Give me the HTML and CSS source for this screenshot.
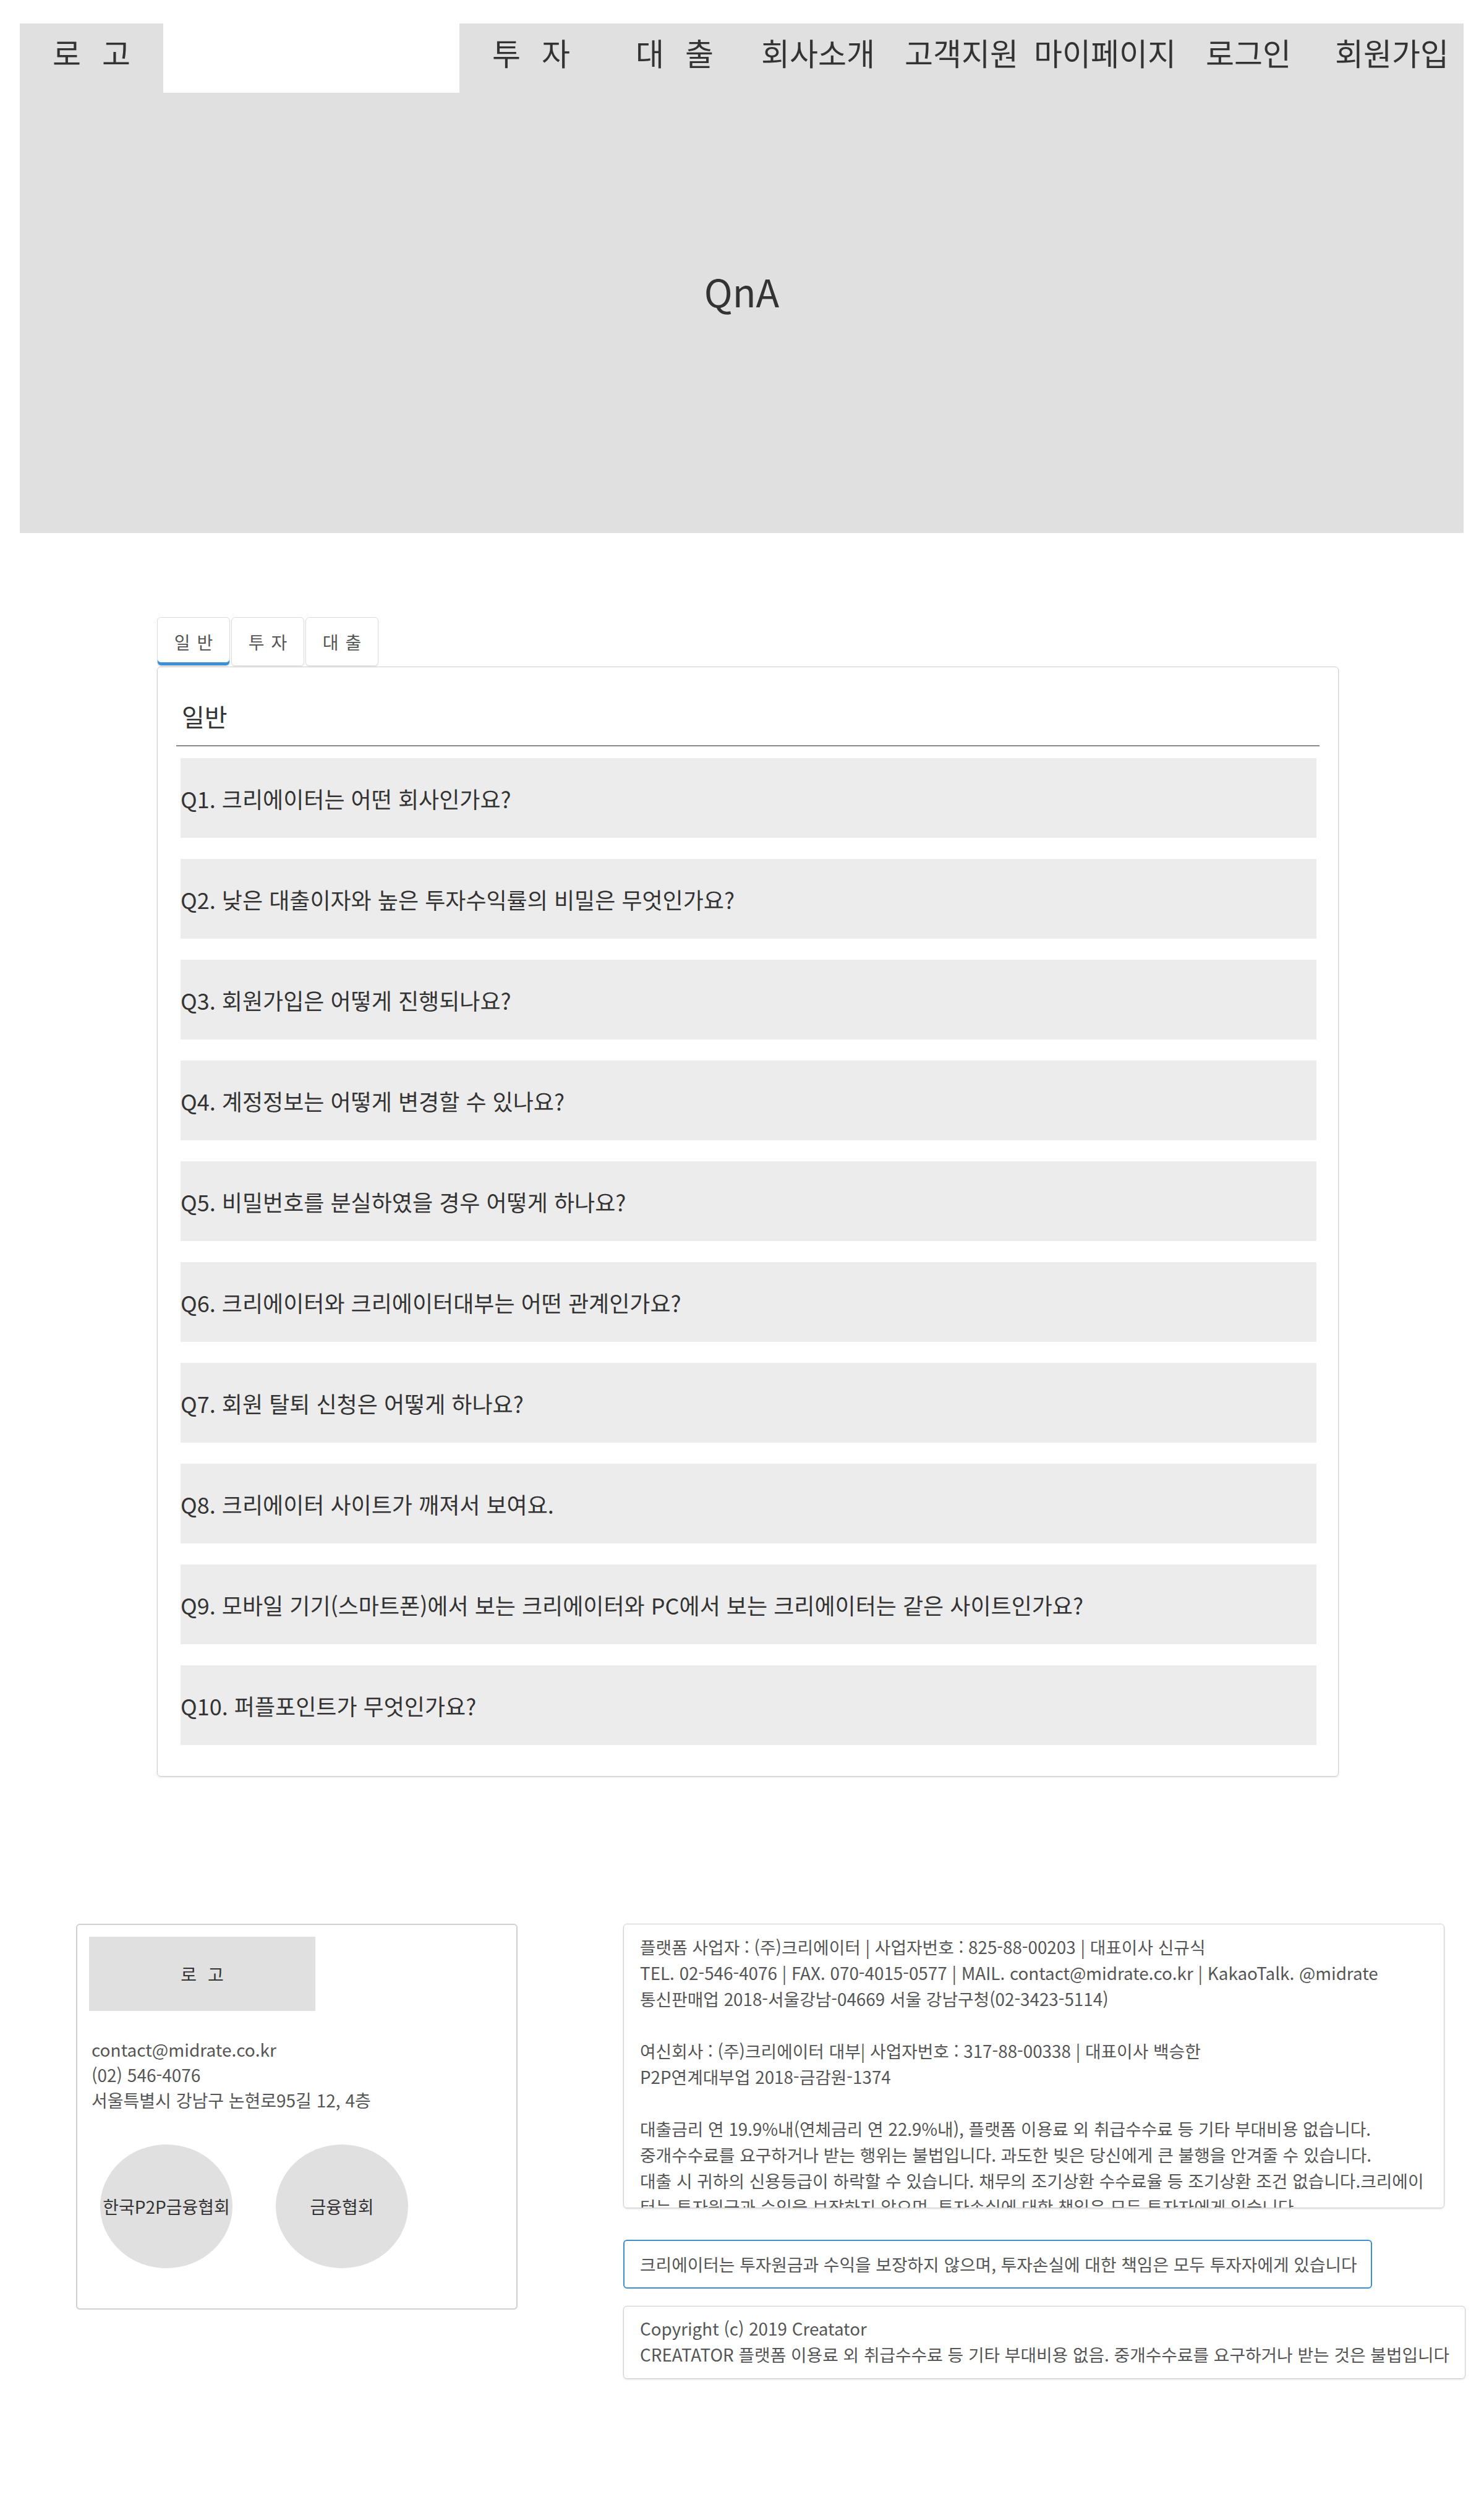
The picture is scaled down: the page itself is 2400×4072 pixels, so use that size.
FILE: index.html
```html
<!DOCTYPE html>
<html lang="ko">
<head>
<meta charset="utf-8">
<title>QnA</title>
<link rel="stylesheet" href="styles.css">
</head>
<body>
<div class="top">
  <header class="bar">
    <div class="logo">로 고</div>
    <div class="spacer"></div>
    <nav class="nav">
      <a class="sp" href="#">투 자</a>
      <a class="sp" href="#">대 출</a>
      <a href="#">회사소개</a>
      <a href="#">고객지원</a>
      <a href="#">마이페이지</a>
      <a href="#">로그인</a>
      <a href="#">회원가입</a>
    </nav>
  </header>
  <div class="hero"><h1>QnA</h1></div>
</div>

<main class="qna">
  <div class="tabs">
    <div class="tab active">일 반</div>
    <div class="tab">투 자</div>
    <div class="tab">대 출</div>
  </div>
  <section class="panel">
    <h2>일반</h2>
    <ul class="qlist">
      <li>Q1. 크리에이터는 어떤 회사인가요?</li>
      <li>Q2. 낮은 대출이자와 높은 투자수익률의 비밀은 무엇인가요?</li>
      <li>Q3. 회원가입은 어떻게 진행되나요?</li>
      <li>Q4. 계정정보는 어떻게 변경할 수 있나요?</li>
      <li>Q5. 비밀번호를 분실하였을 경우 어떻게 하나요?</li>
      <li>Q6. 크리에이터와 크리에이터대부는 어떤 관계인가요?</li>
      <li>Q7. 회원 탈퇴 신청은 어떻게 하나요?</li>
      <li>Q8. 크리에이터 사이트가 깨져서 보여요.</li>
      <li>Q9. 모바일 기기(스마트폰)에서 보는 크리에이터와 PC에서 보는 크리에이터는 같은 사이트인가요?</li>
      <li>Q10. 퍼플포인트가 무엇인가요?</li>
    </ul>
  </section>
</main>

<footer class="footer">
  <div class="f-left">
    <div class="f-logo">로 고</div>
    <div class="contact">
      <div>contact@midrate.co.kr</div>
      <div>(02) 546-4076</div>
      <div>서울특별시 강남구 논현로95길 12, 4층</div>
    </div>
    <div class="badges">
      <div class="badge">한국P2P금융협회</div>
      <div class="badge">금융협회</div>
    </div>
  </div>
  <div class="f-right">
    <div class="info">
      플랫폼 사업자 : (주)크리에이터 | 사업자번호 : 825-88-00203 | 대표이사 신규식<br>
      TEL. 02-546-4076 | FAX. 070-4015-0577 | MAIL. contact@midrate.co.kr | KakaoTalk. @midrate<br>
      통신판매업 2018-서울강남-04669 서울 강남구청(02-3423-5114)<br>
      <br>
      여신회사 : (주)크리에이터 대부| 사업자번호 : 317-88-00338 | 대표이사 백승한<br>
      P2P연계대부업 2018-금감원-1374<br>
      <br>
      대출금리 연 19.9%내(연체금리 연 22.9%내), 플랫폼 이용료 외 취급수수료 등 기타 부대비용 없습니다.<br>
      중개수수료를 요구하거나 받는 행위는 불법입니다. 과도한 빚은 당신에게 큰 불행을 안겨줄 수 있습니다.<br>
      대출 시 귀하의 신용등급이 하락할 수 있습니다. 채무의 조기상환 수수료율 등 조기상환 조건 없습니다.크리에이터는 투자원금과 수익을 보장하지 않으며, 투자손실에 대한 책임은 모두 투자자에게 있습니다
    </div>
    <div class="notice">크리에이터는 투자원금과 수익을 보장하지 않으며, 투자손실에 대한 책임은 모두 투자자에게 있습니다</div>
    <div class="copy">
      Copyright (c) 2019 Creatator<br>
      CREATATOR 플랫폼 이용료 외 취급수수료 등 기타 부대비용 없음. 중개수수료를 요구하거나 받는 것은 불법입니다
    </div>
  </div>
</footer>
</body>
</html>
```
FILE: styles.css
```css
* { box-sizing: border-box; }

body {
  margin: 0;
  font-family: "Noto Sans CJK KR", "Noto Sans", sans-serif;
  color: #333;
  background: #fff;
}

/* ---------- top / hero ---------- */
.top {
  margin: 38px 33px 0 32px;
  height: 824px;
  background: #e0e0e0;
}

.bar {
  display: flex;
  height: 112px;
}

.logo {
  width: 232px;
  padding-top: 10px;
  text-align: center;
  font-size: 50px;
  word-spacing: 20px;
}

.spacer {
  flex: 1;
  background: #fff;
}

.nav {
  display: flex;
}

.nav a {
  width: 232px;
  padding-top: 10px;
  text-align: center;
  font-size: 50px;
  color: #333;
  text-decoration: none;
  white-space: nowrap;
}

.nav a.sp {
  word-spacing: 20px;
}

.hero h1 {
  margin: 0;
  padding-top: 275px;
  text-align: center;
  font-size: 62px;
  font-weight: 400;
  line-height: normal;
}

/* ---------- QnA panel ---------- */
.qna {
  margin: 136px 0 0 254px;
  width: 1911px;
}

.tabs {
  display: flex;
  gap: 2px;
}

.tab {
  width: 118px;
  height: 79px;
  display: flex;
  align-items: center;
  justify-content: center;
  border: 1px solid #dcdcdc;
  border-radius: 6px;
  box-shadow: 0 1px 2px rgba(0, 0, 0, 0.08);
  font-size: 28px;
  color: #555;
  word-spacing: 3px;
  background: #fff;
}

.tab.active {
  box-shadow: inset 0 -5px 0 #3b8fd6, 0 1px 2px rgba(0, 0, 0, 0.08);
}

.panel {
  margin-top: 1px;
  border: 1px solid #cfcfcf;
  border-radius: 6px;
  box-shadow: 0 1px 3px rgba(0, 0, 0, 0.15);
  padding: 50px 30px 50px 30px;
}

.panel h2 {
  margin: 0;
  padding: 0 0 18px 9px;
  font-size: 40px;
  font-weight: 400;
  line-height: normal;
  border-bottom: 2px solid #888;
}

.qlist {
  list-style: none;
  margin: 19px 5px 0 7px;
  padding: 0;
  display: flex;
  flex-direction: column;
  gap: 34px;
}

.qlist li {
  height: 129px;
  display: flex;
  align-items: center;
  background: #ececec;
  font-size: 36px;
  color: #333;
}

/* ---------- footer ---------- */
.footer {
  display: flex;
  align-items: flex-start;
  margin-top: 238px;
  padding-left: 123px;
  padding-bottom: 60px;
}

.f-left {
  width: 714px;
  height: 624px;
  border: 2px solid #d0d0d0;
  border-radius: 6px;
  padding: 19px;
}

.f-logo {
  width: 366px;
  height: 120px;
  background: #e0e0e0;
  display: flex;
  align-items: center;
  justify-content: center;
  font-size: 28px;
  word-spacing: 10px;
  color: #333;
}

.contact {
  margin-top: 42px;
  padding-left: 4px;
  font-size: 28px;
  line-height: 41px;
  color: #555;
}

.badges {
  display: flex;
  gap: 70px;
  margin-top: 51px;
  padding-left: 18px;
}

.badge {
  width: 214px;
  height: 200px;
  border-radius: 50%;
  background: #e0e0e0;
  display: flex;
  align-items: center;
  justify-content: center;
  font-size: 28px;
  color: #333;
  white-space: nowrap;
}

.f-right {
  margin-left: 171px;
  display: flex;
  flex-direction: column;
  align-items: flex-start;
}

.info {
  width: 1328px;
  height: 460px;
  overflow: hidden;
  border: 1px solid #cfcfcf;
  border-radius: 6px;
  box-shadow: 0 1px 3px rgba(0, 0, 0, 0.15);
  padding: 15px 10px 15px 26px;
  font-size: 27.8px;
  line-height: 42px;
  color: #555;
}

.notice {
  margin-top: 51px;
  height: 79px;
  border: 2px solid #3b8fd0;
  border-radius: 6px;
  padding: 0 22px 0 25px;
  font-size: 27.8px;
  line-height: 75px;
  color: #555;
  white-space: nowrap;
}

.copy {
  margin-top: 28px;
  border: 1px solid #cfcfcf;
  border-radius: 6px;
  box-shadow: 0 1px 3px rgba(0, 0, 0, 0.15);
  padding: 14px 25px 18px 26px;
  font-size: 27.8px;
  line-height: 42px;
  color: #555;
  white-space: nowrap;
}
```
